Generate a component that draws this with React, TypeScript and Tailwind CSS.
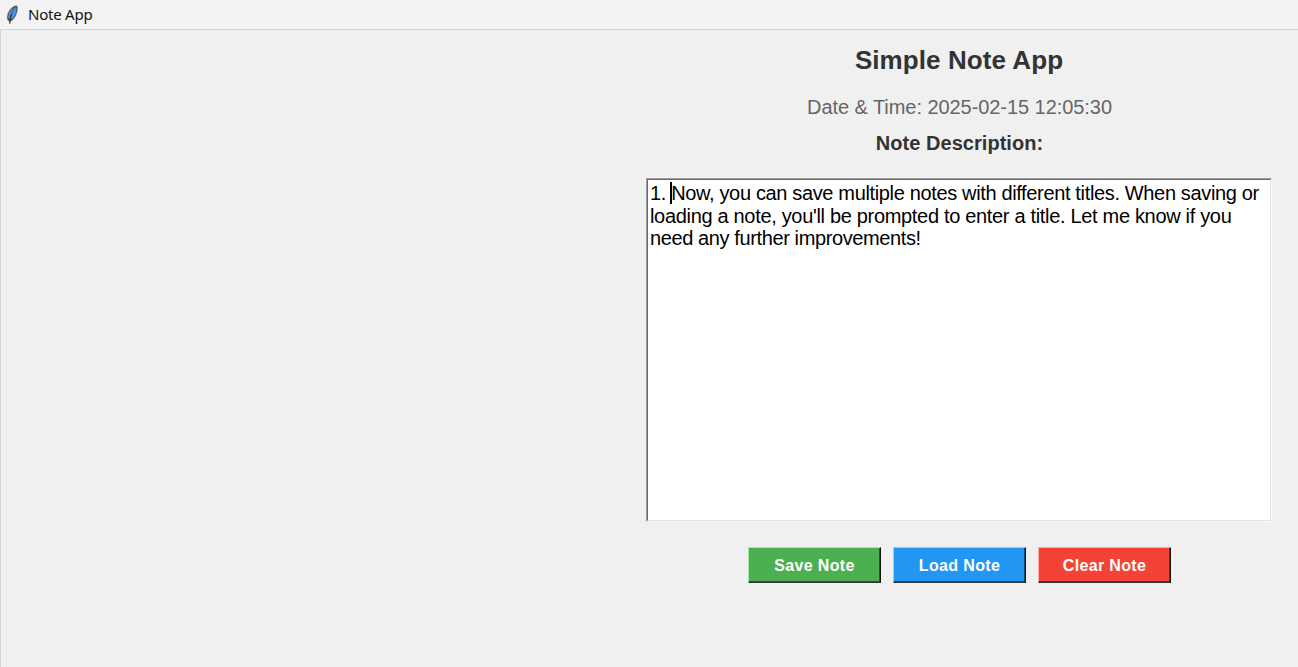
const lines = [
  { text: "Now, you can save multiple notes with different titles. When saving or", spacing: "tracking-[-0.35px]" },
  { text: "loading a note, you'll be prompted to enter a title. Let me know if you", spacing: "tracking-[-0.32px]" },
  { text: "need any further improvements!", spacing: "tracking-[-0.39px]" },
];

const buttons = [
  {
    label: "Save Note",
    color: "bg-[#4caf50] border-t-[#a5e8a8] border-l-[#a5e8a8] shadow-[inset_-1px_-1px_0_#26582a]",
  },
  {
    label: "Load Note",
    color: "bg-[#2196f3] border-t-[#90d0ff] border-l-[#90d0ff] shadow-[inset_-1px_-1px_0_#104b7a]",
  },
  {
    label: "Clear Note",
    color: "bg-[#f44336] border-t-[#ffaaa4] border-l-[#ffaaa4] shadow-[inset_-1px_-1px_0_#7a211b]",
  },
];

function Feather() {
  return (
    <svg width="14" height="20" viewBox="0 0 14 20" className="shrink-0">
      <path d="M10.4 0.6 L11.5 2 L11.3 6 L9.8 10.6 L7.2 14.4 L4.2 16.6 L2 15.6 L1.1 12.6 L1.9 8.6 L4.1 4.4 L7.4 1.6 Z" fill="#3a4a5c" stroke="#858b92" strokeWidth="0.7" />
      <path d="M9.8 1.8 L10.7 4 L9.6 8.8 L7.1 13 L4.5 14.7 L5.3 10.2 L7.2 5.6 Z" fill="#4b93e4" />
      <path d="M8.9 1.9 L5.2 4.8 L3 8.8 L2.1 12.2 L3.2 14.2 L4.4 9.7 L6.4 5.6 Z" fill="#6b9ac6" />
      <path d="M5.6 9.5 L4.2 14 L3.8 19" fill="none" stroke="#22303f" strokeWidth="1" />
    </svg>
  );
}

export default function App() {
  return (
    <div className="flex h-[667px] w-[1298px] flex-col overflow-hidden bg-[#f0f0f0] font-['Liberation_Sans',Arial,sans-serif]">
      <header className="flex h-[29px] shrink-0 items-center gap-[8px] bg-[#f3f3f3] pl-[6px]">
        <Feather />
        <span className="pb-px font-['Noto_Sans','Open_Sans',sans-serif] text-[15px] leading-5 tracking-[-0.23px] text-[#111]">Note App</span>
      </header>
      <main className="flex flex-1 justify-end border-t border-l border-[#d5d5d5] pr-[26px]">
        <section className="flex w-[626px] flex-col items-center">
          <h1 className="mt-[15px] text-[26px] leading-[30px] font-bold tracking-[0.08px] text-[#333]">Simple Note App</h1>
          <p className="mt-[20px] pl-px text-[20px] leading-[24px] tracking-[-0.06px] text-[#666]">Date &amp; Time: 2025-02-15 12:05:30</p>
          <h2 className="mt-[12px] pl-px text-[20px] leading-[24px] font-bold tracking-[0.04px] text-[#333]">Note Description:</h2>
          <div className="mt-[23px] h-[344px] w-full border border-t-[#a0a0a0] border-r-[#f8f8f8] border-b-[#f8f8f8] border-l-[#a0a0a0]">
            <div className="h-full border border-t-[#696969] border-r-[#e3e3e3] border-b-[#e3e3e3] border-l-[#696969] bg-white pt-[2px] pl-[2px] text-[20px] leading-[22.5px] whitespace-nowrap text-black">
              {lines.map((line, i) => (
                <div key={line.text} className={line.spacing}>
                  {i === 0 && (
                    <span className="relative">
                      1.{" "}
                      <span className="absolute top-0 right-[-1px] h-[22px] w-[2px] bg-black" />
                    </span>
                  )}
                  {line.text}
                </div>
              ))}
            </div>
          </div>
          <div className="mt-[25px] flex gap-[12px] pl-[1px]">
            {buttons.map((b) => (
              <button
                key={b.label}
                className={`h-[36px] w-[133px] border border-r-[#101512] border-b-[#303633] pt-px text-[16px] font-bold tracking-[0.35px] text-white ${b.color}`}
              >
                {b.label}
              </button>
            ))}
          </div>
        </section>
      </main>
    </div>
  );
}
